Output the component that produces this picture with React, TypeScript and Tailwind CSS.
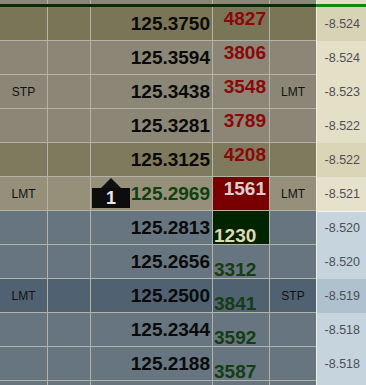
import React from 'react';

type Row = {
  price: string;
  vol: string;
  side: 'ask' | 'bid';
  bg: string;
  right: string;
  rightBg: string;
  leftLabel?: string;
  rightLabel?: string;
  priceColor?: string;
  volCell?: string;
  volText?: string;
  marker?: boolean;
};

const rows: Row[] = [
  { price: '125.3750', vol: '4827', side: 'ask', bg: 'bg-[#7b7557]', right: '-8.524', rightBg: 'bg-[#d9d3b6]' },
  { price: '125.3594', vol: '3806', side: 'ask', bg: 'bg-[#8b8675]', right: '-8.524', rightBg: 'bg-[#e4dfc7]' },
  { price: '125.3438', vol: '3548', side: 'ask', bg: 'bg-[#8b8675]', right: '-8.523', rightBg: 'bg-[#e4dfc7]', leftLabel: 'STP', rightLabel: 'LMT' },
  { price: '125.3281', vol: '3789', side: 'ask', bg: 'bg-[#8b8675]', right: '-8.522', rightBg: 'bg-[#e4dfc7]' },
  { price: '125.3125', vol: '4208', side: 'ask', bg: 'bg-[#7f7a5d]', right: '-8.522', rightBg: 'bg-[#dbd5b8]' },
  {
    price: '125.2969', vol: '1561', side: 'ask', bg: 'bg-[#96907b]', right: '-8.521', rightBg: 'bg-[#e6e1cb]',
    leftLabel: 'LMT', rightLabel: 'LMT', priceColor: 'text-[#0f3f0f]', volCell: 'bg-[#780000]', volText: 'text-[#d8cfcf]', marker: true,
  },
  { price: '125.2813', vol: '1230', side: 'bid', bg: 'bg-[#667580]', right: '-8.520', rightBg: 'bg-[#c6d4de]', volCell: 'bg-[#002400]', volText: 'text-[#e2d9b4]' },
  { price: '125.2656', vol: '3312', side: 'bid', bg: 'bg-[#667580]', right: '-8.520', rightBg: 'bg-[#c6d4de]' },
  { price: '125.2500', vol: '3841', side: 'bid', bg: 'bg-[#506272]', right: '-8.519', rightBg: 'bg-[#afc1cf]', leftLabel: 'LMT', rightLabel: 'STP' },
  { price: '125.2344', vol: '3592', side: 'bid', bg: 'bg-[#667580]', right: '-8.518', rightBg: 'bg-[#c6d4de]' },
  { price: '125.2188', vol: '3587', side: 'bid', bg: 'bg-[#667580]', right: '-8.518', rightBg: 'bg-[#c6d4de]' },
];

const line = 'border-[#b5b2a8]';

const Marker = () => (
  <div className="flex flex-col items-center self-end mb-[2px]">
    <div className="w-0 h-0 border-l-[10px] border-r-[10px] border-b-[10px] border-l-transparent border-r-transparent border-b-[#111111]" />
    <div className="w-[38px] h-[20px] bg-[#0d0d0d] flex items-center justify-center text-[#e6e6e6] font-bold text-[18px] leading-none">
      1
    </div>
  </div>
);

// empty strip of a row cut off by the window edge
const PartialRow = ({ h, bg, rightBg }: { h: string; bg: string; rightBg: string }) => (
  <div className={`flex ${h} ${bg}`}>
    <div className={`w-[48px] border-r ${line}`} />
    <div className={`w-[43px] border-r ${line}`} />
    <div className={`w-[122px] border-r ${line}`} />
    <div className={`w-[57px] border-r ${line}`} />
    <div className="w-[46px]" />
    <div className={`w-[50px] border-l border-[#f2efe2] ${rightBg}`} />
  </div>
);

const App = () => {
  return (
    <div
      className="w-[366px] h-[385px] overflow-hidden bg-[#667580]"
      style={{ fontFamily: '"Liberation Sans", Arial, sans-serif' }}
    >
      <PartialRow h="h-[4px]" bg="bg-[#8b8675]" rightBg="bg-[#e4dfc7]" />
      <div className="flex h-[3px]">
        <div className="w-[316px] bg-[#0b2a0b]" />
        <div className="w-[50px] bg-[#0a8c0a]" />
      </div>

      {rows.map((r, i) => (
        <div key={i} className={`flex h-[34px] ${r.bg}`}>
          <div className={`w-[48px] border-r border-b ${line} flex items-center justify-center text-[12px] text-[#111111]`}>
            {r.leftLabel}
          </div>
          <div className={`w-[43px] border-r border-b ${line}`} />
          <div className={`w-[122px] border-r border-b ${line} flex items-center justify-between pl-[1px] pr-[2px]`}>
            {r.marker ? <Marker /> : <span />}
            <span className={`text-[19px] font-bold leading-none ${r.priceColor ?? 'text-[#0a0a0a]'}`}>{r.price}</span>
          </div>
          <div
            className={`w-[57px] border-r border-b ${line} flex ${r.volCell ?? ''} ${
              r.side === 'ask' ? 'items-start justify-end pr-[3px] pt-[2px]' : 'items-end justify-start pl-[1px]'
            }`}
          >
            <span
              className={`text-[19px] font-bold leading-none ${
                r.volText ?? (r.side === 'ask' ? 'text-[#8c0808]' : 'text-[#153d12]')
              } ${r.side === 'bid' ? 'translate-y-[1px]' : ''}`}
            >
              {r.vol}
            </span>
          </div>
          <div className={`w-[46px] border-b ${line} flex items-center justify-center text-[12px] text-[#111111]`}>
            {r.rightLabel}
          </div>
          <div
            className={`w-[50px] border-l border-[#f2efe2] ${r.rightBg} flex items-center justify-end pr-[6px] text-[12.5px] text-[#4e4e58] ${
              i === 6 ? 'border-t border-t-[#f4f2ea]' : ''
            }`}
          >
            {r.right}
          </div>
        </div>
      ))}

      <PartialRow h="h-[4px]" bg="bg-[#667580]" rightBg="bg-[#c6d4de]" />
    </div>
  );
};

export default App;
